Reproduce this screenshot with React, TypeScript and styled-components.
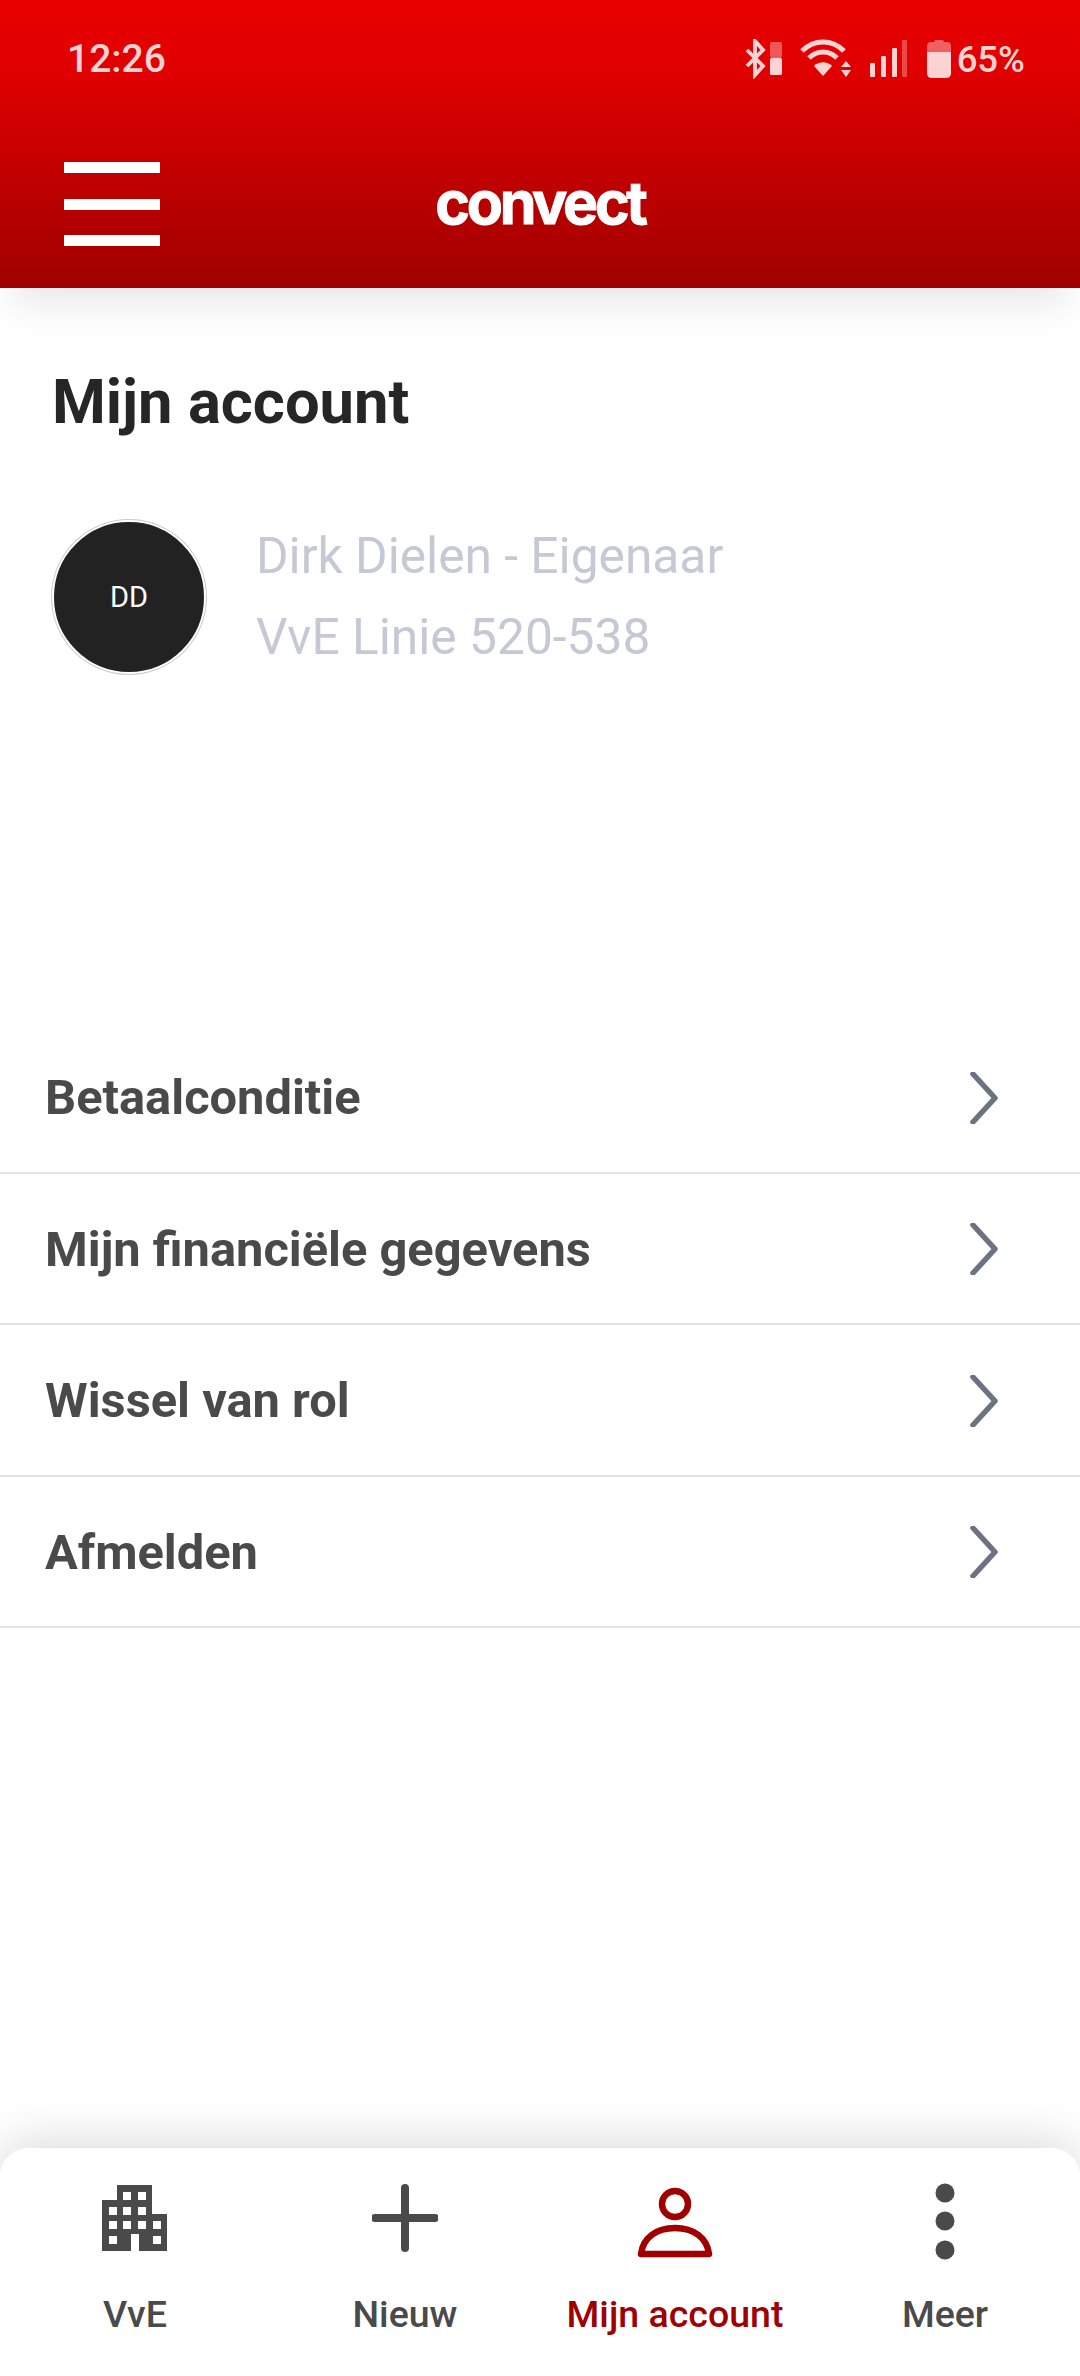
import React from "react";
import styled, { createGlobalStyle } from "styled-components";

const Global = createGlobalStyle`
  html, body { margin: 0; padding: 0; background: #fff; }
  * { box-sizing: border-box; }
`;

const Page = styled.div`
  width: 1080px;
  height: 2376px;
  display: flex;
  flex-direction: column;
  overflow: hidden;
  background: #fff;
  font-family: Roboto, "Liberation Sans", sans-serif;
`;

const Header = styled.header`
  position: relative;
  z-index: 1;
  height: 288px;
  flex: none;
  background: linear-gradient(180deg, #e80000 0%, #e00000 25%, #a00000 100%);
  box-shadow: 0 26px 40px -12px rgba(0, 0, 0, 0.1);
`;

const StatusBar = styled.div`
  height: 116px;
  padding: 2px 55px 0 67px;
  display: flex;
  align-items: center;
  justify-content: space-between;
  color: #fbd3d3;
`;

const Clock = styled.span`
  font-size: 39px;
  font-weight: 500;
`;

const StatusIcons = styled.div`
  display: flex;
  align-items: center;
  height: 40px;
`;

const Percent = styled.span`
  font-size: 36.5px;
  font-weight: 500;
  margin-left: 5px;
`;

const Toolbar = styled.div`
  height: 172px;
  padding: 0 64px;
  display: grid;
  grid-template-columns: 1fr auto 1fr;
  align-items: center;
`;

const Burger = styled.div`
  width: 96px;
  height: 84px;
  margin-top: 4px;
  display: flex;
  flex-direction: column;
  justify-content: space-between;
`;

const BurgerLine = styled.span`
  display: block;
  height: 11px;
  background: #fff;
`;

const Logo = styled.span`
  color: #fff;
  font-family: Inter, "Open Sans", sans-serif;
  font-weight: 700;
  font-size: 59px;
  line-height: 1;
  letter-spacing: -3.3px;
  -webkit-text-stroke: 1px #fff;
`;

const Main = styled.main`
  flex: 1;
  min-height: 0;
`;

const Title = styled.h1`
  margin: 0;
  padding: 78px 0 0 52px;
  font-size: 61.5px;
  line-height: 72px;
  font-weight: 700;
  color: #262626;
`;

const Profile = styled.section`
  margin-top: 78px;
  padding-left: 52px;
  display: flex;
  align-items: center;
  gap: 50px;
`;

const Avatar = styled.div`
  width: 154px;
  height: 154px;
  border-radius: 50%;
  background: #222;
  border: 2px solid #fff;
  box-shadow: 0 0 0 1px #ccc;
  display: flex;
  align-items: center;
  justify-content: center;
  color: #fff;
  font-size: 29px;
`;

const ProfileLines = styled.div`
  display: flex;
  flex-direction: column;
  font-size: 49.7px;
  line-height: 81px;
  color: #c5c9d5;
`;

const Menu = styled.nav`
  margin-top: 344px;
`;

const MenuRow = styled.div`
  height: 151.5px;
  padding: 2px 81px 0 45px;
  border-bottom: 2px solid #e2e2e2;
  display: flex;
  align-items: center;
  justify-content: space-between;
  font-size: 48.8px;
  font-weight: 700;
  color: #4a4a4a;
`;

const BottomNav = styled.footer`
  position: relative;
  height: 228px;
  flex: none;
  background: #fff;
  border-radius: 28px 28px 0 0;
  box-shadow: 0 -10px 44px rgba(0, 0, 0, 0.13);
  display: grid;
  grid-template-columns: repeat(4, 270px);
`;

const NavItem = styled.div<{ $active?: boolean }>`
  display: flex;
  flex-direction: column;
  align-items: center;
  padding-top: 32px;
  color: ${(p) => (p.$active ? "#a00000" : "#4a4a4a")};
  font-size: 37.5px;
  font-weight: 500;
`;

const NavIconSlot = styled.div`
  height: 80px;
  display: flex;
  justify-content: center;
`;

const NavLabel = styled.span`
  margin-top: 32px;
  line-height: 44px;
  white-space: nowrap;
`;

const StatusIcon = styled.svg<{ $gap: number }>`
  margin-right: ${(p) => p.$gap}px;
  flex: none;
`;

const Chevron = () => (
  <svg width="30" height="52" viewBox="0 0 30 52" fill="none">
    <path d="M4 2 L26 26 L4 50" stroke="#6b7280" strokeWidth="5.5" strokeLinecap="round" strokeLinejoin="round" />
  </svg>
);

const Bluetooth = () => (
  <StatusIcon $gap={16} width="40" height="40" viewBox="0 0 40 40">
    <path d="M3 11 L19 27 L11 36 V2 L19 11 L3 27" fill="none" stroke="#fbd3d3" strokeWidth="3.8" />
    <rect x="26" y="3" width="12" height="16" rx="2" fill="#f7a0a0" opacity="0.55" />
    <rect x="26" y="19" width="12" height="17" rx="1.5" fill="#fbd3d3" />
  </StatusIcon>
);

const Wifi = () => (
  <StatusIcon $gap={16} width="52" height="40" viewBox="0 0 52 40" fill="none">
    <path d="M2 12 C14 0 32 0 44 12" stroke="#fbd3d3" strokeWidth="5" />
    <path d="M9 19 C17 11 29 11 37 19" stroke="#fbd3d3" strokeWidth="5" />
    <path d="M23 37 L14 27 C19 22 27 22 32 27 Z" fill="#fbd3d3" />
    <path d="M46 22 L51 28 H41 Z M46 38 L41 31 H51 Z" fill="#fbd3d3" />
  </StatusIcon>
);

const Signal = () => (
  <StatusIcon $gap={18} width="40" height="40" viewBox="0 0 40 40">
    <rect x="2" y="24" width="5" height="14" rx="1" fill="#fbd3d3" />
    <rect x="13" y="17" width="5" height="21" rx="1" fill="#fbd3d3" />
    <rect x="24" y="9" width="5" height="29" rx="1" fill="#fbd3d3" />
    <rect x="34" y="1" width="5" height="37" rx="1" fill="#f7a0a0" opacity="0.45" />
  </StatusIcon>
);

const Battery = () => (
  <StatusIcon $gap={0} width="26" height="40" viewBox="0 0 26 40">
    <path d="M8 3 Q8 1 10 1 H16 Q18 1 18 3 H21 Q25 3 25 7 V13 H1 V7 Q1 3 5 3 Z" fill="#f7a0a0" opacity="0.6" />
    <path d="M1 13 H25 V34 Q25 39 20 39 H6 Q1 39 1 34 Z" fill="#fbd3d3" />
  </StatusIcon>
);

const Building = () => (
  <svg width="66" height="80" viewBox="0 -5 66 80">
    <path
      fillRule="evenodd"
      fill="#4a4a4a"
      d="M15 0 H50 V29 H65 V66 H37 V49 H29 V66 H0 V15 H15 Z
         M21 7 H29 V15 H21 Z M36 7 H44 V15 H36 Z
         M7 22 H15 V30 H7 Z M21 22 H29 V30 H21 Z M36 22 H44 V30 H36 Z
         M7 36 H15 V44 H7 Z M21 36 H29 V44 H21 Z M36 36 H44 V44 H36 Z M51 36 H59 V44 H51 Z
         M7 51 H15 V59 H7 Z M51 51 H59 V59 H51 Z"
    />
  </svg>
);

const Plus = () => (
  <svg width="66" height="80" viewBox="0 -5 66 80">
    <path d="M33 3 V63 M3 33 H63" stroke="#4a4a4a" strokeWidth="8" strokeLinecap="round" />
  </svg>
);

const Person = () => (
  <svg width="76" height="80" viewBox="0 0 76 80" fill="none">
    <circle cx="38" cy="24" r="13" stroke="#a00000" strokeWidth="6.5" />
    <path d="M4 74 C6 58 19 48 38 48 C57 48 70 58 72 74 Z" stroke="#a00000" strokeWidth="6.5" strokeLinejoin="round" />
  </svg>
);

const Dots = () => (
  <svg width="20" height="80" viewBox="0 0 20 80">
    <circle cx="10" cy="13" r="9.5" fill="#4a4a4a" />
    <circle cx="10" cy="41" r="9.5" fill="#4a4a4a" />
    <circle cx="10" cy="70" r="9.5" fill="#4a4a4a" />
  </svg>
);

const menuItems = ["Betaalconditie", "Mijn financiële gegevens", "Wissel van rol", "Afmelden"];

export default function App() {
  return (
    <Page>
      <Global />
      <Header>
        <StatusBar>
          <Clock>12:26</Clock>
          <StatusIcons>
            <Bluetooth />
            <Wifi />
            <Signal />
            <Battery />
            <Percent>65%</Percent>
          </StatusIcons>
        </StatusBar>
        <Toolbar>
          <Burger>
            <BurgerLine />
            <BurgerLine />
            <BurgerLine />
          </Burger>
          <Logo>convect</Logo>
        </Toolbar>
      </Header>
      <Main>
        <Title>Mijn account</Title>
        <Profile>
          <Avatar>DD</Avatar>
          <ProfileLines>
            <span>Dirk Dielen - Eigenaar</span>
            <span>VvE Linie 520-538</span>
          </ProfileLines>
        </Profile>
        <Menu>
          {menuItems.map((item) => (
            <MenuRow key={item}>
              {item}
              <Chevron />
            </MenuRow>
          ))}
        </Menu>
      </Main>
      <BottomNav>
        <NavItem>
          <NavIconSlot><Building /></NavIconSlot>
          <NavLabel>VvE</NavLabel>
        </NavItem>
        <NavItem>
          <NavIconSlot><Plus /></NavIconSlot>
          <NavLabel>Nieuw</NavLabel>
        </NavItem>
        <NavItem $active>
          <NavIconSlot><Person /></NavIconSlot>
          <NavLabel>Mijn account</NavLabel>
        </NavItem>
        <NavItem>
          <NavIconSlot><Dots /></NavIconSlot>
          <NavLabel>Meer</NavLabel>
        </NavItem>
      </BottomNav>
    </Page>
  );
}
